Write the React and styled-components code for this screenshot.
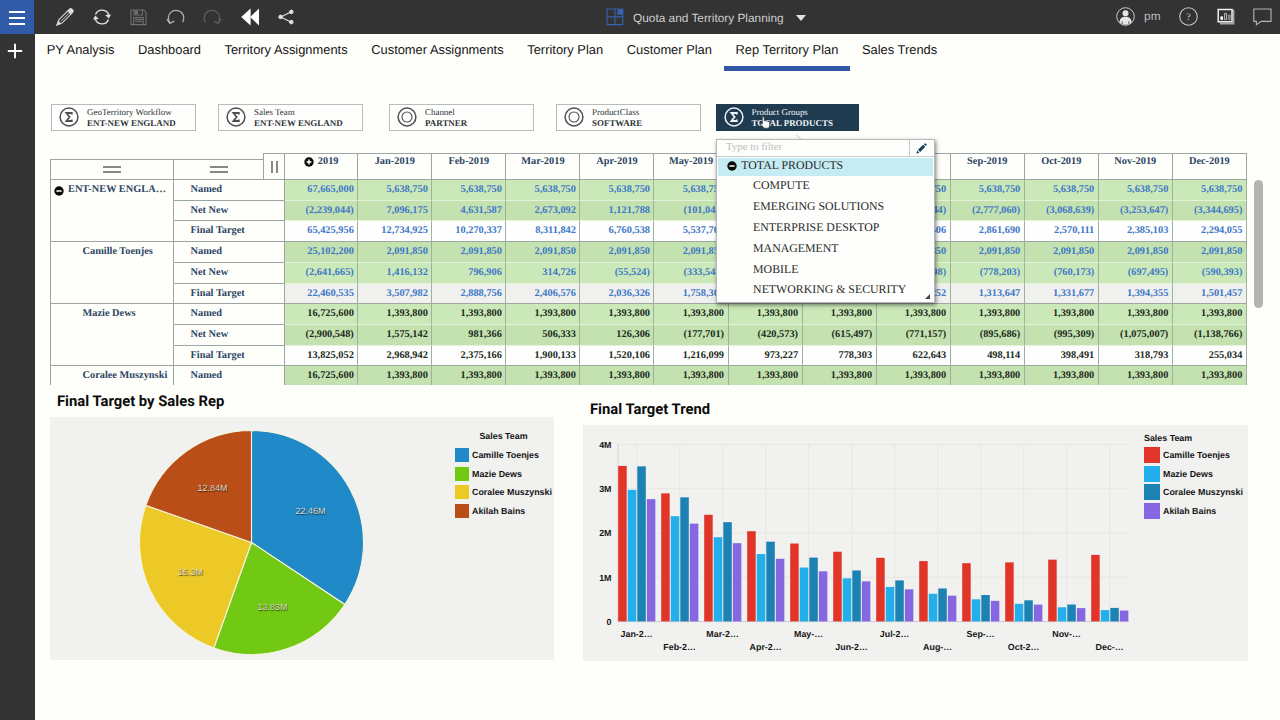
import React, { useState } from "react";
import styled, { createGlobalStyle, css } from "styled-components";

const SANS = `"Liberation Sans", Arial, sans-serif`;
const SERIF = `"Liberation Serif", "Times New Roman", serif`;

const tabs = [
  "PY Analysis",
  "Dashboard",
  "Territory Assignments",
  "Customer Assignments",
  "Territory Plan",
  "Customer Plan",
  "Rep Territory Plan",
  "Sales Trends",
];

const selectors = [
  { label: "GeoTerritory Workflow", value: "ENT-NEW ENGLAND", icon: "sigma", gap: 0 },
  { label: "Sales Team", value: "ENT-NEW ENGLAND", icon: "sigma", gap: 22.5 },
  { label: "Channel", value: "PARTNER", icon: "ring", gap: 26.5 },
  { label: "ProductClass", value: "SOFTWARE", icon: "ring", gap: 22.5 },
  { label: "Product Groups", value: "TOTAL PRODUCTS", icon: "sigma", gap: 15, active: true },
];

const products = [
  "COMPUTE",
  "EMERGING SOLUTIONS",
  "ENTERPRISE DESKTOP",
  "MANAGEMENT",
  "MOBILE",
  "NETWORKING & SECURITY",
];

const months = ["Jan", "Feb", "Mar", "Apr", "May", "Jun", "Jul", "Aug", "Sep", "Oct", "Nov", "Dec"];

const same = (total, month) => [total, ...months.map(() => month)];

const groups = [
  {
    name: "ENT-NEW ENGLA…",
    parent: true,
    rollup: true,
    rows: [
      { label: "Named", values: same(67665000, 5638750) },
      {
        label: "Net New",
        values: [-2239044, 7096175, 4631587, 2673092, 1121788, -101044, -1021535, -1758348, -2417244, -2777060, -3068639, -3253647, -3344695],
      },
      {
        label: "Final Target",
        values: [65425956, 12734925, 10270337, 8311842, 6760538, 5537706, 4617215, 3880402, 3221506, 2861690, 2570111, 2385103, 2294055],
      },
    ],
  },
  {
    name: "Camille Toenjes",
    rollup: true,
    rows: [
      { label: "Named", values: same(25102200, 2091850) },
      {
        label: "Net New",
        values: [-2641665, 1416132, 796906, 314726, -55524, -333544, -518736, -656943, -729598, -778203, -760173, -697495, -590393],
      },
      {
        label: "Final Target",
        values: [22460535, 3507982, 2888756, 2406576, 2036326, 1758306, 1573114, 1434907, 1362252, 1313647, 1331677, 1394355, 1501457],
      },
    ],
  },
  {
    name: "Mazie Dews",
    rows: [
      { label: "Named", values: same(16725600, 1393800) },
      {
        label: "Net New",
        values: [-2900548, 1575142, 981366, 506333, 126306, -177701, -420573, -615497, -771157, -895686, -995309, -1075007, -1138766],
      },
      {
        label: "Final Target",
        values: [13825052, 2968942, 2375166, 1900133, 1520106, 1216099, 973227, 778303, 622643, 498114, 398491, 318793, 255034],
      },
    ],
  },
  {
    name: "Coralee Muszynski",
    rows: [{ label: "Named", values: same(16725600, 1393800) }],
  },
];

const pieData = [
  { name: "Camille Toenjes", value: 22.46, color: "#2089c8", x: 310.5, y: 511 },
  { name: "Mazie Dews", value: 13.83, color: "#72c914", x: 272.5, y: 607 },
  { name: "Coralee Muszynski", value: 16.3, color: "#edc928", x: 190.5, y: 572 },
  { name: "Akilah Bains", value: 12.84, color: "#ba4e19", x: 212.5, y: 488 },
];

const trendData = [
  {
    name: "Camille Toenjes",
    color: "#e23529",
    values: [3.51, 2.89, 2.407, 2.036, 1.758, 1.573, 1.435, 1.362, 1.314, 1.332, 1.394, 1.501],
  },
  {
    name: "Mazie Dews",
    color: "#23aeec",
    values: [2.97, 2.375, 1.9, 1.52, 1.216, 0.973, 0.778, 0.623, 0.498, 0.398, 0.319, 0.255],
  },
  {
    name: "Coralee Muszynski",
    color: "#1c82b3",
    values: [3.5, 2.8, 2.24, 1.8, 1.44, 1.15, 0.925, 0.744, 0.595, 0.476, 0.381, 0.305],
  },
  {
    name: "Akilah Bains",
    color: "#8567e2",
    values: [2.76, 2.207, 1.766, 1.413, 1.13, 0.904, 0.724, 0.58, 0.464, 0.38, 0.3, 0.245],
  },
];

const monthTicks = ["Jan-2…", "Feb-2…", "Mar-2…", "Apr-2…", "May-…", "Jun-2…", "Jul-2…", "Aug-…", "Sep-…", "Oct-2…", "Nov-…", "Dec-…"];

const formatValue = (value) => {
  const text = Math.abs(value).toLocaleString("en-US");
  return value < 0 ? `(${text})` : text;
};

/* ---------- icons ---------- */

const PencilIcon = () => (
  <svg width="18" height="18" viewBox="0 0 18 18" fill="none" stroke="#d8d8d8" strokeWidth="1.1">
    <path d="M3 11.6 L11.8 2.8 L15.1 6.1 L6.3 14.9 L1.2 16.8 Z" />
    <path d="M5 13.2 L13.2 5" strokeWidth="0.9" />
    <path d="M12.4 2.2 L14 0.8 Q15 0.3 16.2 1.5 Q17.6 2.9 16.9 3.9 L15.6 5.4 Z" fill="#e4e4e4" />
    <path d="M1 17 L2.4 13.4 L4.6 15.6 Z" fill="#d8d8d8" />
  </svg>
);

const RefreshIcon = () => (
  <svg width="18" height="18" viewBox="0 0 18 18" fill="none" stroke="#e4e4e4" strokeWidth="1.4">
    <path d="M2.5 6.6 A7 7 0 0 1 15.8 7.4" />
    <path d="M15.5 11.4 A7 7 0 0 1 2.2 10.6" />
    <path d="M12.2 7 L18 6.4 L15.8 10.4 Z" fill="#e4e4e4" stroke="none" />
    <path d="M5.8 11 L0 11.6 L2.2 7.6 Z" fill="#e4e4e4" stroke="none" />
  </svg>
);

const SaveIcon = () => (
  <svg width="17" height="17" viewBox="0 0 17 17" fill="none" stroke="#707070" strokeWidth="1.1">
    <path d="M1 1 H13.6 L16 3.4 V15.6 H1 Z" />
    <path d="M4 1 V6 H12.4 V1" />
    <path d="M4.6 1.4 H8 V5.4 H4.6 Z" fill="#707070" stroke="none" />
    <path d="M3.6 15.4 V8.6 H13.2 V15.4 M5 10.6 H12 M5 12.8 H12" />
  </svg>
);

const UndoIcon = ({ flip, color }) => (
  <svg width="19" height="17" viewBox="0 0 19 17" fill="none" stroke={color} strokeWidth="1.3">
    <g transform={flip ? "translate(18.5 -0.8) scale(-1 1)" : "translate(0.5 -0.8)"}>
      <path d="M3.4 14.4 A7.7 7.7 0 1 1 16 14" />
      <path d="M0.3 10.8 L3.3 15.2 L7.8 13" />
    </g>
  </svg>
);

const RewindIcon = () => (
  <svg width="19" height="18" viewBox="0 0 19 18" fill="#fff">
    <path d="M10.6 0.4 V17.6 L1.2 9 Z" />
    <path d="M19 0.4 V17.6 L10.2 9 Z" />
  </svg>
);

const ShareIcon = () => (
  <svg width="16" height="16" viewBox="0 0 16 16" fill="#e0e0e0" stroke="#e0e0e0">
    <path d="M13.2 2.8 L2.8 7.9 L13.2 13.2" fill="none" strokeWidth="1.1" />
    <circle cx="13.3" cy="2.9" r="1.8" />
    <circle cx="2.6" cy="7.9" r="1.8" />
    <circle cx="13.3" cy="13.1" r="1.8" />
  </svg>
);

const BookIcon = () => (
  <svg width="18" height="18" viewBox="0 0 18 18" fill="none" stroke="#3563b4" strokeWidth="1.1">
    <path d="M1 1 H8.9 V16.6 H1 Z M1 8.9 H16.8 V16.6 H8.9" />
    <path d="M11.4 0.6 H17.4 V6.8 H11.4 Z" fill="#3563b4" stroke="none" />
    <path d="M8.9 1 H11 M16.8 7 V9" />
  </svg>
);

const UserIcon = () => (
  <svg width="19" height="19" viewBox="0 0 19 19" fill="#e6e6e6">
    <circle cx="9.5" cy="9.5" r="8.8" fill="none" stroke="#c8c8c8" strokeWidth="1" />
    <circle cx="9.5" cy="6.2" r="3" />
    <path d="M3.4 15.6 C3.6 11.8 5.8 9.8 9.5 9.8 S15.4 11.8 15.6 15.6 Q9.5 20 3.4 15.6 Z" />
    <path d="M6.2 14.2 V17 M12.8 14.2 V17" stroke="#333" strokeWidth="0.7" />
  </svg>
);

const HelpIcon = () => (
  <svg width="19" height="19" viewBox="0 0 19 19" fill="none">
    <circle cx="9.5" cy="9.5" r="8.8" stroke="#c8c8c8" strokeWidth="1.1" />
    <text x="9.5" y="13" textAnchor="middle" fontFamily={SERIF} fontSize="10" fill="#d0d0d0">
      ?
    </text>
  </svg>
);

const ReportIcon = () => (
  <svg width="18" height="17" viewBox="0 0 18 17" fill="none">
    <path d="M3 2.6 H16.6 V15.6 H3" stroke="#a8a8a8" strokeWidth="1.6" />
    <path d="M1.2 1.4 H15 V13.8 H1.2 Z" fill="#333" stroke="#f0f0f0" strokeWidth="1.5" />
    <path d="M3.4 8.4 H6 V11.8 H3.4 Z" fill="#fff" />
    <path d="M7.6 5.4 H9.6 V11.6 H7.6 Z" stroke="#bdbdbd" />
    <path d="M11.4 7 H13.2 V11.6 H11.4 Z" fill="#777" stroke="#999" strokeWidth="0.8" />
  </svg>
);

const ChatIcon = () => (
  <svg width="19" height="18" viewBox="0 0 19 18" fill="none" stroke="#b4b4b4" strokeWidth="1.1">
    <path d="M0.8 1 H18 V13.4 H8.2 L3.4 16.8 V13.4 H0.8 Z" />
  </svg>
);

const SelectorIcon = ({ type, color }) => (
  <svg width="20" height="20" viewBox="0 0 20 20" fill="none" stroke={color}>
    <circle cx="10" cy="10" r="8.9" strokeWidth="1.5" />
    {type === "ring" ? (
      <circle cx="10" cy="10" r="5" strokeWidth="1.1" />
    ) : (
      <path d="M12.8 7.4 V6 H7.4 L10.6 10 L7.4 14 H12.8 V12.6" strokeWidth="1.8" />
    )}
  </svg>
);

const ToggleIcon = ({ plus }) => (
  <svg width="10" height="10" viewBox="0 0 10 10">
    <circle cx="5" cy="5" r="4.7" fill="#0a0a0a" />
    <path d={plus ? "M2.6 5 H7.4 M5 2.6 V7.4" : "M2.4 5 H7.6"} stroke="#fff" strokeWidth="1.5" />
  </svg>
);

const EditIcon = () => (
  <svg width="11" height="11" viewBox="0 0 11 11" fill="#123f63">
    <path d="M0.4 10.6 L1.2 7.6 L3.4 9.8 Z" />
    <path d="M2 6.8 L7.2 1.8 L9.2 3.8 L4.2 9 Z" />
    <path d="M7.9 1.2 L8.8 0.4 Q9.4 0.1 10 0.8 L10.5 1.3 Q10.9 1.8 10.5 2.3 L9.8 3.1 Z" />
  </svg>
);

const HandIcon = () => (
  <svg width="11" height="13" viewBox="0 0 11 13" fill="#fff" stroke="#333" strokeWidth="0.7">
    <path d="M2.6 8 L2.2 1.8 Q2.2 0.6 3.1 0.6 Q4 0.6 4.1 1.8 L4.4 5 Q5.8 4.2 6.4 5.2 Q7.6 4.6 8.1 5.7 Q9.6 5.3 9.8 6.8 L9.6 9.4 L8.8 12.2 H4 L0.8 8.4 Q0.6 7.2 1.6 7.2 Z" />
  </svg>
);

/* ---------- charts ---------- */

const piePaths = () => {
  const total = pieData.reduce((sum, item) => sum + item.value, 0);
  const point = (angle) => `${201.5 + 112 * Math.sin(angle)} ${125.5 - 112 * Math.cos(angle)}`;
  let angle = 0;
  return pieData.map((item) => {
    const start = angle;
    angle += (item.value / total) * Math.PI * 2;
    return { ...item, d: `M201.5 125.5 L${point(start)} A112 112 0 0 1 ${point(angle)} Z` };
  });
};

const PieChart = () => (
  <svg width="405" height="243" viewBox="0 0 405 243">
    {piePaths().map((item) => (
      <path key={item.name} d={item.d} fill={item.color} stroke="#f6f4dc" strokeWidth="1.1" />
    ))}
    {pieData.map((item) => (
      <PieLabel key={item.name} x={item.x - 50} y={item.y - 417 + 3.4} textAnchor="middle">
        {item.value}M
      </PieLabel>
    ))}
  </svg>
);

// origin of the plot area is 36,197 and 1M is 44.3px high
const TrendChart = () => (
  <svg width="561" height="235.5" viewBox="0 0 561 235.5">
    {[0, 1, 2, 3, 4].map((tick) => (
      <g key={tick}>
        <path d={`M35 ${196.6 - tick * 44.3} H546`} stroke={tick ? "#e6e6e3" : "#c9c9d2"} />
        <ChartLabel x="28.5" y={199.8 - tick * 44.3} textAnchor="end">
          {tick ? `${tick}M` : "0"}
        </ChartLabel>
      </g>
    ))}
    <path d="M35 19 V197" stroke="#d2d2d0" />
    {monthTicks.map((label, i) => (
      <g key={label}>
        <path d={`M${53.8 + i * 43} 19 V196`} stroke="#e6e6e3" />
        {trendData.map((rep, j) => (
          <rect
            key={rep.name}
            x={35.2 + i * 43 + j * 9.55}
            y={196.4 - rep.values[i] * 44.3}
            width="8.5"
            height={rep.values[i] * 44.3}
            fill={rep.color}
          />
        ))}
        <ChartLabel x={53.6 + i * 43} y={i % 2 ? 225 : 212.4} textAnchor="middle">
          {label}
        </ChartLabel>
      </g>
    ))}
  </svg>
);

function Legend({ items, size, centered }) {
  return (
    <LegendBox $centered={centered}>
      <LegendTitle $centered={centered}>Sales Team</LegendTitle>
      {items.map((item) => (
        <LegendItem key={item.name}>
          <Swatch $size={size} $color={item.color} />
          {item.name}
        </LegendItem>
      ))}
    </LegendBox>
  );
}

function ProductMenu() {
  return (
    <Menu>
      <FilterRow>
        <FilterText>Type to filter</FilterText>
        <FilterEdit>
          <EditIcon />
        </FilterEdit>
      </FilterRow>
      <MenuItem $selected>
        <ToggleIcon />
        TOTAL PRODUCTS
      </MenuItem>
      {products.map((name) => (
        <MenuItem key={name}>{name}</MenuItem>
      ))}
      <Grip />
    </Menu>
  );
}

function Crosstab() {
  const rows = groups.flatMap((group) =>
    group.rows.map((row, i) => ({ ...row, rollup: group.rollup, last: i === group.rows.length - 1 }))
  );
  return (
    <TableArea>
      <Table>
        <RowHeaders>
          <Handles>
            <Handle $width={123}>
              <Bars />
            </Handle>
            <Handle $width={90}>
              <Bars />
            </Handle>
            <Handle $width={21} $tall>
              <Bars $vertical />
            </Handle>
          </Handles>
          {groups.map((group) => (
            <Group key={group.name}>
              <GroupName $parent={group.parent}>
                {group.parent && <ToggleIcon />}
                {group.name}
              </GroupName>
              <Measures>
                {group.rows.map((row) => (
                  <Measure key={row.label}>{row.label}</Measure>
                ))}
              </Measures>
            </Group>
          ))}
        </RowHeaders>
        <DataGrid>
          <ColumnName>
            <ToggleIcon plus />
            2019
          </ColumnName>
          {months.map((month) => (
            <ColumnName key={month}>{month}-2019</ColumnName>
          ))}
          {rows.map((row, i) =>
            row.values.map((value, j) => (
              <Cell
                key={`${i}-${j}`}
                $odd={i % 2}
                $total={row.label === "Final Target"}
                $rollup={row.rollup}
                $last={row.last}
              >
                {formatValue(value)}
              </Cell>
            ))
          )}
        </DataGrid>
      </Table>
      <ScrollThumb />
    </TableArea>
  );
}

function App() {
  const [activeTab, setActiveTab] = useState("Rep Territory Plan");

  return (
    <>
      <GlobalStyle />
      <Page>
        <Sidebar>
          <MenuButton>
            <i />
            <i />
            <i />
          </MenuButton>
          <svg width="16" height="16" viewBox="0 0 16 16" stroke="#fff" strokeWidth="1.9">
            <path d="M8 0.8 V15.2 M0.8 8 H15.2" />
          </svg>
        </Sidebar>
        <Main>
          <TopBar>
            <Tools>
              <PencilIcon />
              <RefreshIcon />
              <SaveIcon />
              <UndoIcon color="#b0b0b0" />
              <UndoIcon color="#5e5e5e" flip />
              <RewindIcon />
              <ShareIcon />
            </Tools>
            <BookTitle>
              <BookIcon />
              <span>Quota and Territory Planning</span>
              <Caret />
            </BookTitle>
            <Account>
              <UserIcon />
              <UserName>pm</UserName>
              <HelpIcon />
              <ReportIcon />
              <ChatIcon />
            </Account>
          </TopBar>
          <Tabs>
            {tabs.map((tab) => (
              <Tab key={tab} $active={tab === activeTab} onClick={() => setActiveTab(tab)}>
                {tab}
              </Tab>
            ))}
          </Tabs>
          <Selectors>
            {selectors.map((item) => (
              <Selector key={item.label} $active={item.active} $gap={item.gap}>
                <SelectorIcon type={item.icon} color={item.active ? "#eef3f5" : "#4d4f50"} />
                <div>
                  <SelectorLabel>{item.label}</SelectorLabel>
                  <SelectorValue>{item.value}</SelectorValue>
                </div>
                {item.active && (
                  <>
                    <Pointer>
                      <HandIcon />
                    </Pointer>
                    <MenuTip />
                    <ProductMenu />
                  </>
                )}
              </Selector>
            ))}
          </Selectors>
          <Crosstab />
          <Charts>
            <ChartColumn $width={504}>
              <ChartTitle $height={32}>Final Target by Sales Rep</ChartTitle>
              <Panel>
                <PieChart />
                <Legend items={pieData} size={14} centered />
              </Panel>
            </ChartColumn>
            <ChartColumn $width={665}>
              <ChartTitle $height={40}>Final Target Trend</ChartTitle>
              <Panel>
                <TrendChart />
                <Legend items={trendData} size={16} />
              </Panel>
            </ChartColumn>
          </Charts>
        </Main>
      </Page>
    </>
  );
}

const GlobalStyle = createGlobalStyle`
  * {
    box-sizing: border-box;
  }
  body {
    margin: 0;
    overflow: hidden;
    background: #fefefb;
    font-family: ${SANS};
    text-rendering: geometricPrecision;
  }
  svg {
    display: block;
    flex: none;
  }
`;

const Page = styled.div`
  display: flex;
  width: 1280px;
  height: 720px;
`;

const Sidebar = styled.aside`
  display: flex;
  flex-direction: column;
  align-items: center;
  gap: 9px;
  width: 35px;
  background: #333;
  padding-right: 5px;
`;

const MenuButton = styled.div`
  display: flex;
  flex-direction: column;
  justify-content: center;
  align-items: center;
  gap: 4px;
  width: 34px;
  height: 34px;
  padding-top: 1px;
  margin-right: -4px;
  background: #2f5ba8;

  i {
    width: 16px;
    height: 2px;
    background: #fff;
  }
`;

const Main = styled.main`
  flex: 1;
  min-width: 0;
`;

const TopBar = styled.header`
  display: flex;
  align-items: center;
  justify-content: space-between;
  height: 34px;
  background: #333;
  color: #cfcfcf;
  font-size: 11.85px;
`;

const Tools = styled.div`
  display: grid;
  grid-template-columns: repeat(7, 36.9px);
  justify-items: center;
  align-items: center;
  width: 571px;
  padding-left: 11.5px;
`;

const BookTitle = styled.div`
  display: flex;
  align-items: center;
  flex: 1;

  span {
    margin: 1px 12px 0 9px;
    white-space: nowrap;
  }
`;

const Caret = styled.div`
  border: 5.5px solid transparent;
  border-top: 6px solid #e2e2e2;
  border-bottom: 0;
  margin-top: 2px;
`;

const Account = styled.div`
  display: flex;
  align-items: center;
  gap: 18.5px;
  padding: 0 8px 1px 0;

  svg:first-child {
    margin-right: -9px;
  }
`;

const UserName = styled.span`
  color: #bdbdbd;
  margin-top: -1px;
`;

const Tabs = styled.nav`
  display: flex;
  height: 37px;
`;

const Tab = styled.div`
  height: 37px;
  padding: 7.5px 11.75px 0;
  border-bottom: 5px solid ${(p) => (p.$active ? "#3057a4" : "transparent")};
  font-size: 12.88px;
  line-height: 16px;
  color: #151515;
  white-space: nowrap;
  cursor: pointer;

  &:nth-child(n + 3) {
    padding-right: 11.9px;
  }
`;

const Selectors = styled.div`
  display: flex;
  padding: 33px 0 0 16px;
`;

const Selector = styled.div`
  position: relative;
  display: flex;
  align-items: center;
  gap: 8px;
  width: ${(p) => (p.$active ? 143 : 144.5)}px;
  height: 27px;
  margin-left: ${(p) => p.$gap}px;
  padding-left: 7px;
  border: 1px solid ${(p) => (p.$active ? "#1f3b50" : "#b9bcba")};
  background: ${(p) => (p.$active ? "#1f3b50" : "#fefefd")};
  color: ${(p) => (p.$active ? "#f0f4f6" : "#303638")};
  font-family: ${SERIF};
  font-size: 8.95px;
  line-height: 11px;
  white-space: nowrap;

  > svg {
    margin-bottom: 2px;
  }
`;

const SelectorLabel = styled.div`
  font-size: 8.95px;
`;

const SelectorValue = styled.div`
  font-weight: bold;
`;

const Pointer = styled.div`
  position: absolute;
  left: 43px;
  top: 11px;
  z-index: 2;
`;

const MenuTip = styled.div`
  position: absolute;
  left: 77px;
  top: 31px;
  width: 6px;
  height: 6px;
  border-top: 1px solid #cfd1ce;
  transform: rotate(42deg);
`;

const Menu = styled.div`
  position: absolute;
  left: -1px;
  top: 34px;
  z-index: 3;
  width: 219px;
  height: 164px;
  border: 1px solid #b4b8b8;
  background: #fefefc;
  box-shadow: 1px 2px 4px rgba(0, 0, 0, 0.5);
  color: #2b2b2b;
  font-size: 11.83px;
`;

const FilterRow = styled.div`
  display: flex;
  height: 17px;
  border-bottom: 1px solid #c5cacb;
  margin-bottom: 1px;
`;

const FilterText = styled.div`
  flex: 1;
  padding-left: 9.5px;
  color: #bdbdb8;
  font-size: 10.8px;
  line-height: 14px;
`;

const FilterEdit = styled.div`
  display: grid;
  place-items: center;
  width: 25px;
  border-left: 1px solid #c5cacb;
`;

const MenuItem = styled.div`
  display: flex;
  align-items: center;
  gap: 4px;
  height: 20.8px;
  padding: 0 0 1px 36.6px;

  ${(p) =>
    p.$selected &&
    css`
      height: 18px;
      margin: 0 1px;
      padding: 0 0 3px 9.8px;
      background: #c6ecf3;
    `}
`;

const Grip = styled.div`
  position: absolute;
  right: 4px;
  bottom: 3px;
  border-left: 5px solid transparent;
  border-bottom: 5px solid #444;
`;

const TableArea = styled.div`
  display: flex;
  margin-top: 22px;
  padding-left: 15px;
`;

const Table = styled.div`
  display: flex;
  width: 1197px;
  height: 232px;
  overflow: hidden;
  color: #2c4563;
  font-family: ${SERIF};
  font-size: 10.35px;
  font-weight: bold;
  line-height: 19px;
  white-space: nowrap;
`;

const RowHeaders = styled.div`
  width: 234px;
`;

const Handles = styled.div`
  display: flex;
  align-items: flex-end;
  height: 27px;
`;

const Handle = styled.div`
  display: grid;
  place-items: center;
  width: ${(p) => p.$width}px;
  height: ${(p) => (p.$tall ? 27 : 21)}px;
  border: 1px solid #9da5a3;
  border-right: 0;
`;

const Bars = styled.div`
  width: ${(p) => (p.$vertical ? 7 : 18)}px;
  height: ${(p) => (p.$vertical ? 12 : 7)}px;
  border: 0 solid #858988;
  border-width: ${(p) => (p.$vertical ? "0 2px" : "2px 0")};
`;

const Group = styled.div`
  display: flex;
`;

const GroupName = styled.div`
  display: flex;
  align-items: flex-start;
  gap: 4px;
  width: 123px;
  padding-left: ${(p) => (p.$parent ? 3 : 31.5)}px;
  border: solid #9da5a3;
  border-width: 0 0 1px 1px;

  svg {
    margin-top: 6px;
  }
`;

const Measures = styled.div`
  flex: 1;
`;

const Measure = styled.div`
  height: 20.73px;
  padding-left: 16.5px;
  border: solid #9da5a3;
  border-width: 0 0 1px 1px;
`;

const DataGrid = styled.div`
  display: grid;
  grid-template-columns: 73.3px repeat(12, 74.06px);
  grid-template-rows: 27px;
  grid-auto-rows: 20.73px;
  border-left: 1px solid #9da5a3;
`;

const ColumnName = styled.div`
  display: flex;
  justify-content: center;
  gap: 4px;
  border: solid #9da5a3;
  border-width: 1px 1px 1px 0;
  line-height: 15px;

  svg {
    margin-top: 3px;
  }
`;

const cellBackground = (p) => {
  if (p.$total) return p.$odd ? "#f0f0ef" : "#fefefe";
  return p.$odd ? "#c4e2b0" : "#cbe9b8";
};

const Cell = styled.div`
  padding-right: 3.5px;
  border-right: 1px solid #9fb09f;
  border-bottom: 1px solid ${(p) => (p.$last ? "#9da9a0" : "#e2f3d8")};
  background: ${cellBackground};
  color: ${(p) => (p.$rollup ? "#3f78c8" : "#1d2b22")};
  text-align: right;
`;

const ScrollThumb = styled.div`
  width: 9px;
  height: 128px;
  margin: 27px 0 0 7px;
  border-radius: 5px;
  background: #b3b3b1;
`;

const Charts = styled.div`
  display: flex;
  align-items: flex-start;
  gap: 29px;
  padding-left: 15px;
`;

const ChartColumn = styled.section`
  width: ${(p) => p.$width}px;
`;

const ChartTitle = styled.h2`
  height: ${(p) => p.$height}px;
  margin: 0;
  padding: 0 0 7px 7px;
  display: flex;
  align-items: flex-end;
  font: bold 14.8px/17px Roboto, sans-serif;
  color: #0c0c0c;
`;

const Panel = styled.div`
  display: flex;
  background: #f1f1ef;
`;

const LegendBox = styled.div`
  width: ${(p) => (p.$centered ? 97 : 104)}px;
  padding-top: ${(p) => (p.$centered ? 13 : 7)}px;
  color: #151515;
  font-size: 8.9px;
  font-weight: bold;
  white-space: nowrap;
`;

const LegendTitle = styled.div`
  line-height: 12px;
  margin-bottom: ${(p) => (p.$centered ? 4 : 2)}px;
  text-align: ${(p) => (p.$centered ? "center" : "left")};
`;

const LegendItem = styled.div`
  display: flex;
  align-items: center;
  gap: 3px;
  height: 18.5px;
`;

const Swatch = styled.div`
  flex: none;
  width: ${(p) => p.$size}px;
  height: ${(p) => p.$size}px;
  background: ${(p) => p.$color};
`;

const ChartLabel = styled.text`
  font: bold 8.9px ${SANS};
  fill: #151515;
`;

const PieLabel = styled.text`
  font: 9px ${SANS};
  fill: #dcdacb;
  text-shadow: 0.5px 0.5px 1px rgba(0, 0, 0, 0.7);
`;

export default App;
